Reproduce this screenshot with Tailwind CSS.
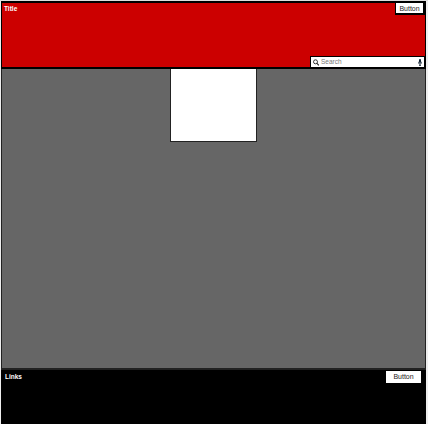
<!DOCTYPE html>
<html lang="en">
<head>
<meta charset="utf-8">
<title>Wireframe</title>
<script src="https://cdn.jsdelivr.net/npm/@tailwindcss/browser@4"></script>
</head>
<body class="w-[428px] h-[424px] overflow-hidden bg-[#eee] font-['Liberation_Sans',sans-serif] text-[6.5px] leading-[8px]">
<div class="w-[428px] h-[424px] flex flex-col border-t border-[#dedede] pr-[2px] pl-px">
  <header class="h-[68px] shrink-0 bg-[#cc0000] border-t-2 border-x border-b-2 border-black flex flex-col justify-between">
    <div class="flex justify-between items-start">
      <h1 class="pl-[2px] pt-[2px] text-white font-bold text-[6.5px] leading-[8px]">Title</h1>
      <button class="w-[30px] h-[12px] bg-white border-black border-l border-b-2 border-r-2 text-[#222] text-[7px] leading-[11px] whitespace-nowrap">Button</button>
    </div>
    <label class="self-end w-[115px] h-[11px] bg-white border border-b-0 border-black flex items-center pl-[2px] pr-[2px]">
      <svg class="w-[6px] h-[7px] shrink-0" viewBox="0 0 6 7" fill="none" stroke="#222"><circle cx="2.5" cy="2.8" r="2" stroke-width=".9"/><path d="M4 4.4 5.8 6.4" stroke-width="1.1"/></svg>
      <span class="ml-[2px] flex-1 text-[#777]">Search</span>
      <svg class="w-[4px] h-[7px] shrink-0" viewBox="0 0 4 7"><rect x="1" width="2" height="4" rx="1" fill="#123"/><path d="M.4 2.8v.6a1.6 1.6 0 0 0 3.2 0v-.6M2 5v1.6M1 6.6h2" fill="none" stroke="#123" stroke-width=".8"/></svg>
    </label>
  </header>
  <main class="h-[301px] shrink-0 bg-[#666] border border-t-0 border-b-2 border-[#222] flex justify-center items-start">
    <div class="w-[87px] h-[73px] bg-white border border-t-0 border-[#222]"></div>
  </main>
  <footer class="flex-1 bg-black text-white flex justify-between items-start pl-[4px] pr-[5px] pt-px">
    <h2 class="pt-[2px] font-bold text-[6.5px] leading-[8px]">Links</h2>
    <button class="w-[35px] h-[12px] bg-white text-[#222] text-[7px] leading-[12px]">Button</button>
  </footer>
</div>
</body>
</html>
